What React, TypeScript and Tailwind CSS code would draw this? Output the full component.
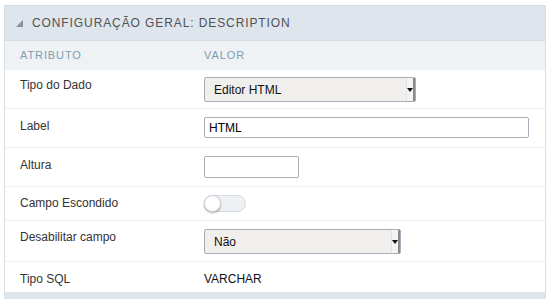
import React from 'react';

const Select = ({ value, width }: { value: string; width: string }) => (
  <div className={`${width} h-[25px] flex items-stretch bg-[#f0efed] border border-[#a7aeb8] rounded-[2px]`}>
    <div className="flex-1 flex items-center pl-[9px] text-[12px] text-[#111]">{value}</div>
    <div className="w-[9px] flex items-center justify-center bg-[#f4f4f4] border-l border-[#e2e2e2] border-r-[2px] border-r-[#8a8a8a]">
      <svg width="6" height="4" viewBox="0 0 6 4">
        <path d="M0 0 L6 0 L3 4 Z" fill="#111" />
      </svg>
    </div>
  </div>
);

const App: React.FC = () => {
  return (
    <div className="w-[547px] h-[299px] bg-white pt-[5px] pl-[4px] pr-[1px] font-['Liberation_Sans',Arial,sans-serif] overflow-hidden">
      <div className="border-l border-r border-t border-[#d6dee6]">
        {/* Panel header */}
        <div className="h-[35px] bg-[#dfe5ec] border-b border-[#d3dbe3] flex items-center pl-[11px] gap-[9px] text-[12px] tracking-[0.9px] text-[#4f5256]">
          <svg width="7" height="7" viewBox="0 0 7 7" className="mt-[1px]">
            <path d="M7 0 L7 7 L0 7 Z" fill="#8d9296" />
          </svg>
          <span>CONFIGURAÇÃO GERAL: DESCRIPTION</span>
        </div>

        {/* Column header */}
        <div className="h-[29px] bg-[#eef2f5] flex items-center text-[11px] tracking-[0.9px] text-[#7f9bb2]">
          <div className="w-[199px] pl-[15px]">ATRIBUTO</div>
          <div>VALOR</div>
        </div>

        {/* Rows */}
        <div className="text-[12px] text-[#333]">
          <div className="h-[39px] flex items-start pt-[7px] border-b border-[#eef1f4]">
            <div className="w-[199px] pl-[15px] leading-[16px] pt-[-1px]">Tipo do Dado</div>
            <Select value="Editor HTML" width="w-[212px]" />
          </div>

          <div className="h-[39px] flex items-start pt-[8px] border-b border-[#eef1f4]">
            <div className="w-[199px] pl-[15px] leading-[16px] pt-[1px]">Label</div>
            <div className="w-[325px] h-[21px] border border-[#a7aeb8] rounded-[2px] flex items-center pl-[4px] text-[12px] text-black">HTML</div>
          </div>

          <div className="h-[39px] flex items-start pt-[8px] border-b border-[#eef1f4]">
            <div className="w-[199px] pl-[15px] leading-[16px] pt-[1px]">Altura</div>
            <div className="w-[95px] h-[22px] border border-[#a7aeb8] rounded-[2px]" />
          </div>

          <div className="h-[34px] flex items-start pt-[8px] border-b border-[#eef1f4]">
            <div className="w-[199px] pl-[15px] leading-[16px]">Campo Escondido</div>
            <div className="w-[42px] h-[17px] rounded-full bg-[#eef1f4] border border-[#d5dbe2] relative">
              <div className="absolute left-[-1px] top-[-1px] w-[17px] h-[17px] rounded-full bg-white border border-[#cfd4da] shadow-[0_1px_2px_rgba(0,0,0,0.35)]" />
            </div>
          </div>

          <div className="h-[41px] flex items-start pt-[8px] border-b border-[#eef1f4]">
            <div className="w-[199px] pl-[15px] leading-[16px]">Desabilitar campo</div>
            <Select value="Não" width="w-[197px]" />
          </div>

          <div className="h-[30px] flex items-start pt-[9px]">
            <div className="w-[199px] pl-[15px] leading-[16px]">Tipo SQL</div>
            <div className="leading-[16px] text-[#111]">VARCHAR</div>
          </div>
        </div>

        {/* Footer bar */}
        <div className="h-[8px] bg-[#dfe5ec]" />
      </div>
    </div>
  );
};

export default App;
